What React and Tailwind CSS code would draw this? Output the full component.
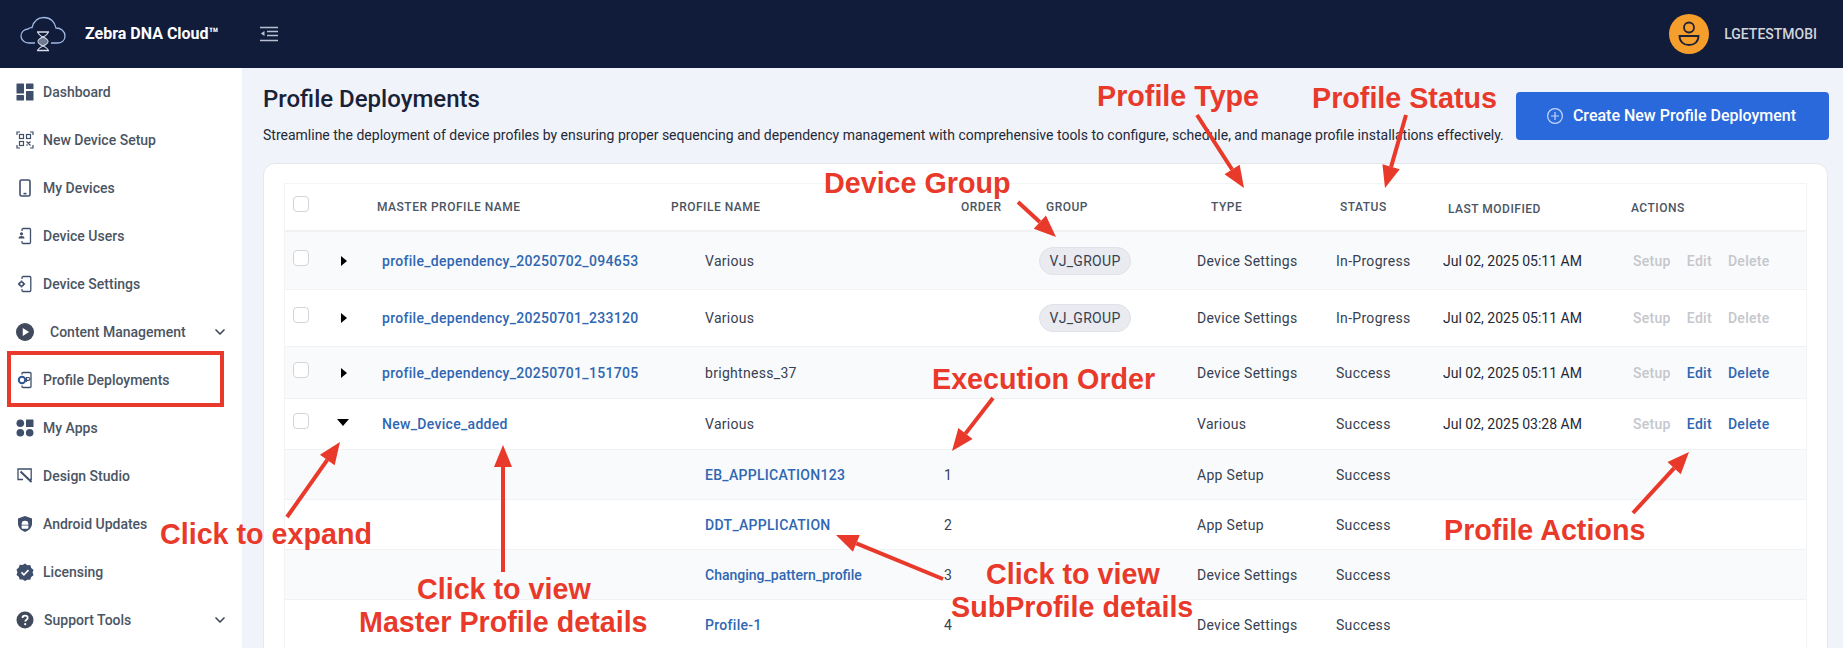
import React from "react";
import { ChevronDown } from "lucide-react";

const DashboardIcon = () => (
  <svg width="18" height="18" viewBox="0 0 18 18" fill="#3f4f6b">
    <rect x="0.5" y="0.5" width="7.5" height="10" rx="0.5" />
    <rect x="10" y="0.5" width="7.5" height="5.5" rx="0.5" />
    <rect x="0.5" y="12" width="7.5" height="5.5" rx="0.5" />
    <rect x="10" y="8" width="7.5" height="9.5" rx="0.5" />
  </svg>
);

const QrIcon = () => (
  <svg width="18" height="18" viewBox="0 0 18 18" fill="none" stroke="#3f4f6b" strokeWidth="1.2">
    <path d="M1 4V1h3M14 1h3v3M1 14v3h3M14 17h3v-3" />
    <rect x="3.5" y="3.5" width="4" height="4" />
    <rect x="10.5" y="3.5" width="4" height="4" />
    <rect x="3.5" y="10.5" width="4" height="4" />
    <path d="M10.5 10.5l4 4M14.5 10.5l-2 2M10.5 14.5l1-1" />
  </svg>
);

const PhoneIcon = () => (
  <svg width="18" height="18" viewBox="0 0 18 18" fill="none" stroke="#3f4f6b" strokeWidth="1.6">
    <rect x="4" y="1" width="10" height="16" rx="1.6" />
    <path d="M7.5 14.6h3" />
  </svg>
);

const DeviceUsersIcon = () => (
  <svg width="18" height="18" viewBox="0 0 18 18" fill="none" stroke="#3f4f6b" strokeWidth="1.3">
    <path d="M6 4V2.6C6 2 6.5 1.5 7 1.5h6.5c.6 0 1 .5 1 1v12.8c0 .7-.4 1.2-1 1.2H7c-.5 0-1-.5-1-1.2V14" />
    <circle cx="5.5" cy="6.8" r="1.6" fill="#3f4f6b" stroke="none" />
    <path d="M2.5 11.5c0-1.6 1.4-2.4 3-2.4s3 .8 3 2.4z" fill="#3f4f6b" stroke="none" />
  </svg>
);

const DeviceSettingsIcon = () => (
  <svg width="18" height="18" viewBox="0 0 18 18" fill="none" stroke="#3f4f6b" strokeWidth="1.3">
    <path d="M6 4V2.6C6 2 6.5 1.5 7 1.5h6.8c.6 0 1 .5 1 1v12.8c0 .7-.4 1.2-1 1.2H7c-.5 0-1-.5-1-1.2V14" />
    <circle cx="5.5" cy="9" r="2" strokeWidth="1.6" />
    <path d="M5.5 5.4v1.4M5.500 11.200v1.400M1.900 9h1.400M7.700 9h1.400" strokeWidth="1.500" />
  </svg>
);

const PlayIcon = () => (
  <svg width="20" height="20" viewBox="0 0 20 20">
    <circle cx="10" cy="10" r="10" fill="#414a5c" />
    <path d="M7.500 5.500l7 4.500-7 4.500z" fill="#fff" />
  </svg>
);

const DeploymentIcon = () => (
  <svg width="18" height="18" viewBox="0 0 18 18" fill="none">
    <path d="M6 3.500V2.500C6 2 6.500 1.500 7 1.500h7c.6 0 1 .5 1 1v13c0 .6-.4 1-1 1H7c-.5 0-1-.4-1-1v-1" stroke="#3f4f6b" strokeWidth="1.300" />
    <circle cx="6" cy="9" r="3.200" stroke="#2f5596" strokeWidth="2" />
    <path d="M10.500 11V6.500h2a1.300 1.300 0 010 2.800h-2" stroke="#3f4f6b" strokeWidth="1.200" />
  </svg>
);

const AppsIcon = () => (
  <svg width="18" height="18" viewBox="0 0 18 18" fill="#3f4f6b">
    <circle cx="4.300" cy="4.300" r="3.800" />
    <rect x="10" y="0.5" width="7.500" height="7.500" rx="0.5" />
    <circle cx="4.300" cy="13.700" r="3.800" />
    <circle cx="13.700" cy="13.700" r="3.800" />
  </svg>
);

const StudioIcon = () => (
  <svg width="18" height="18" viewBox="0 0 18 18" fill="none" stroke="#3f4f6b" strokeWidth="1.300">
    <path d="M14 12.500h1.200V2H2v10.500h5" />
    <path d="M4.500 4.500l11 10.500" strokeWidth="2" />
  </svg>
);

const ShieldIcon = () => (
  <svg width="18" height="18" viewBox="0 0 18 18">
    <path d="M9 1l7 2.400v5.200c0 4-3 7-7 8.400-4-1.400-7-4.400-7-8.400V3.400z" fill="#3f4f6b" />
    <path d="M5.600 9.200a3.400 3.400 0 016.800 0v.6H5.600zM5.600 10.600h6.800v2.200c0 .5-.4.9-.9.9h-5c-.5 0-.9-.4-.9-.9z" fill="#fff" />
  </svg>
);

const BadgeIcon = () => (
  <svg width="18" height="18" viewBox="0 0 18 18">
    <path d="M9 .5l2.400 1.700 2.900-.1.9 2.800 2.300 1.800-.9 2.800.9 2.800-2.300 1.700-.9 2.800-2.900-.1L9 18l-2.400-1.600-2.900.1-.9-2.800L.5 12l.9-2.800-.9-2.800 2.300-1.800.9-2.800 2.900.1z" fill="#3f4f6b" />
    <path d="M5.500 9.400l2.400 2.400 4.600-4.600" fill="none" stroke="#fff" strokeWidth="1.700" />
  </svg>
);

const HelpIcon = () => (
  <svg width="18" height="18" viewBox="0 0 18 18">
    <circle cx="9" cy="9" r="8.500" fill="#414a5c" />
    <path d="M6.500 7c0-1.500 1.100-2.400 2.600-2.400S11.700 5.500 11.700 6.900c0 1.700-2.500 1.900-2.500 3.600" fill="none" stroke="#fff" strokeWidth="1.700" />
    <circle cx="9.200" cy="13.200" r="1.100" fill="#fff" />
  </svg>
);

const CloudLogo = () => (
  <svg width="46" height="36" viewBox="0 0 46 36" fill="none">
    <path
      d="M15 27H9C4.500 27 1 24 1 20c0-3.800 3-6.800 7-7 1-1 2.300-1.500 4-1.300C13.500 5.500 18 1.500 24 1.500c6.500 0 11 4.500 12 10.500 5 0 9 3.500 9 8s-3.500 7-8 7h-6"
      stroke="#9fb8e4"
      strokeWidth="1.300"
    />
    <ellipse cx="23" cy="25.500" rx="4" ry="5" fill="#6f7a92" />
    <path d="M18 16c0 5 10 5 10 9.500s-10 4.500-10 9M28 16c0 5-10 5-10 9.500s10 4.500 10 9" stroke="#d6dce8" strokeWidth="1.100" />
    <path d="M17 16h12M17 34.500h12" stroke="#d6dce8" strokeWidth="1.300" />
  </svg>
);

const navItems = [
  { label: "Dashboard", icon: <DashboardIcon /> },
  { label: "New Device Setup", icon: <QrIcon /> },
  { label: "My Devices", icon: <PhoneIcon /> },
  { label: "Device Users", icon: <DeviceUsersIcon /> },
  { label: "Device Settings", icon: <DeviceSettingsIcon /> },
  { label: "Content Management", icon: <PlayIcon />, textClass: "ml-4", more: true },
  { label: "Profile Deployments", icon: <DeploymentIcon /> },
  { label: "My Apps", icon: <AppsIcon /> },
  { label: "Design Studio", icon: <StudioIcon /> },
  { label: "Android Updates", icon: <ShieldIcon /> },
  { label: "Licensing", icon: <BadgeIcon /> },
  { label: "Support Tools", icon: <HelpIcon />, textClass: "ml-[10px]", more: true },
];

const gridCols =
  "grid grid-cols-[46px_40px_300px_270px_90px_160px_140px_110px_185px_182px] items-center";

const rows = [
  { h: "h-[58px]", name: "profile_dependency_20250702_094653", profile: "Various", group: "VJ_GROUP", type: "Device Settings", status: "In-Progress", date: "Jul 02, 2025 05:11 AM", active: false, bg: "bg-[#f9fafb]" },
  { h: "h-[57px]", name: "profile_dependency_20250701_233120", profile: "Various", group: "VJ_GROUP", type: "Device Settings", status: "In-Progress", date: "Jul 02, 2025 05:11 AM", active: false, bg: "bg-white" },
  { h: "h-[52px]", name: "profile_dependency_20250701_151705", profile: "brightness_37", type: "Device Settings", status: "Success", date: "Jul 02, 2025 05:11 AM", active: true, bg: "bg-[#f9fafb]" },
  { h: "h-[51px]", name: "New_Device_added", profile: "Various", type: "Various", status: "Success", date: "Jul 02, 2025 03:28 AM", active: true, open: true, bg: "bg-white" },
];

const subRows = [
  { name: "EB_APPLICATION123", order: 1, type: "App Setup", bg: "bg-[#f9fafb]" },
  { name: "DDT_APPLICATION", order: 2, type: "App Setup", bg: "bg-white" },
  { name: "Changing_pattern_profile", nameClass: "tracking-normal", order: 3, type: "Device Settings", bg: "bg-[#f9fafb]" },
  { name: "Profile-1", order: 4, type: "Device Settings", bg: "bg-white" },
];

const Checkbox = () => (
  <div className="ml-2 -mt-[6px] size-4 rounded-[4px] border border-[#d1d5db] bg-white" />
);

const arrows = [
  [1197, 115, 1244, 188],
  [1406, 115, 1385, 188],
  [1018, 202, 1056, 237],
  [993, 398, 952, 451],
  [287, 517, 340, 442],
  [503, 572, 503, 445],
  [943, 579, 836, 535],
  [1633, 513, 1689, 452],
];

function Arrow({ from }) {
  const [x1, y1, x2, y2] = from;
  const len = Math.hypot(x2 - x1, y2 - y1);
  const ux = (x2 - x1) / len;
  const uy = (y2 - y1) / len;
  const bx = x2 - ux * 22;
  const by = y2 - uy * 22;
  const points = `${x2},${y2} ${bx - uy * 9},${by + ux * 9} ${bx + uy * 9},${by - ux * 9}`;
  return (
    <g>
      <line x1={x1} y1={y1} x2={bx} y2={by} stroke="#e8392a" strokeWidth="4" />
      <polygon points={points} fill="#e8392a" />
    </g>
  );
}

function Note({ className, children }) {
  return (
    <div
      className={`absolute whitespace-nowrap font-['Liberation_Sans',Arial,sans-serif] text-[28.7px] leading-[28px] font-bold text-[#e8392a] ${className}`}
    >
      {children}
    </div>
  );
}

export default function App() {
  return (
    <div className="relative h-[648px] overflow-hidden bg-[#f0f3f9] font-['Roboto',sans-serif]">
      <header className="flex h-[68px] items-center bg-[#111c3a] pl-[20px] pr-[26px]">
        <CloudLogo />
        <span className="ml-[19px] text-base font-bold text-white">Zebra DNA Cloud™</span>
        <svg className="ml-[41px]" width="18" height="16" viewBox="0 0 18 16" fill="none" stroke="#b9bfce" strokeWidth="1.600">
          <path d="M0 1.500h18M7 5.500h11M7 9.500h11M0 14.500h18" />
          <path d="M4.500 5v5L0.800 7.500z" fill="#b9bfce" stroke="none" />
        </svg>
        <div className="ml-auto flex size-10 items-center justify-center rounded-full bg-[#f59e2b]">
          <svg width="22" height="26" viewBox="0 0 22 26" fill="none" stroke="#1d2236" strokeWidth="1.800">
            <circle cx="11" cy="6.500" r="5" />
            <path d="M1.500 15h19c0 5.500-4 9-9.500 9s-9.500-3.500-9.500-9z" />
          </svg>
        </div>
        <span className="ml-[15px] text-sm font-medium text-[#d1d5db]">LGETESTMOBI</span>
      </header>

      <div className="flex h-[580px]">
        <aside className="w-[242px] shrink-0 bg-white">
          {navItems.map((item) => (
            <div key={item.label} className="flex h-12 items-center pl-4 pr-[14px] text-sm font-medium text-[#4b5563]">
              <span className="flex w-[18px] shrink-0 justify-center">{item.icon}</span>
              <span className={item.textClass || "ml-[9px]"}>{item.label}</span>
              {item.more && <ChevronDown className="ml-auto text-[#3f4654]" size={16} strokeWidth={2.500} />}
            </div>
          ))}
        </aside>

        <main className="min-w-0 flex-1 pl-[21px] pr-[14px]">
          <div className="flex h-[95px] items-start justify-between">
            <div>
              <h1 className="mt-[15px] text-2xl font-medium leading-8 text-[#1a2238]">Profile Deployments</h1>
              <p className="mt-[10px] text-sm leading-5 text-[#1f2937]">
                Streamline the deployment of device profiles by ensuring proper sequencing and dependency management with comprehensive tools to configure, schedule, and manage profile installations effectively.
              </p>
            </div>
            <button className="mt-6 flex h-12 w-[313px] items-center justify-center gap-[10px] rounded bg-[#2a69dc] pr-0.5 text-base font-medium text-white">
              <svg width="16" height="16" viewBox="0 0 16 16" fill="none" stroke="#c6d8f7" strokeWidth="1.200">
                <circle cx="8" cy="8" r="7.400" />
                <path d="M8 4v8M4 8h8" />
              </svg>
              Create New Profile Deployment
            </button>
          </div>

          <section className="mr-px h-[500px] rounded-xl border border-[#e5e7eb] bg-white pl-5 pr-5 pt-[19px]">
            <div className="border border-b-0 border-[#f3f4f6]">
              <div className={`${gridCols} h-[48px] border-b-2 border-[#f1f2f4] text-xs font-medium tracking-[0.5px] text-[#4b5563]`}>
                <Checkbox />
                <span />
                <span className="pl-[6px]">MASTER PROFILE NAME</span>
                <span>PROFILE NAME</span>
                <span className="pl-5">ORDER</span>
                <span className="pl-[15px]">GROUP</span>
                <span className="-mt-px pl-5">TYPE</span>
                <span className="pl-[9px]">STATUS</span>
                <span className="mt-[3px] pl-[7px]">LAST MODIFIED</span>
                <span className="mt-px pl-[5px]">ACTIONS</span>
              </div>

              {rows.map((row) => (
                <div key={row.name} className={`${gridCols} ${row.h} ${row.bg} border-b border-[#f1f2f4] text-sm tracking-[0.3px] text-[#374151]`}>
                  <Checkbox />
                  <div className="pl-[10px]">
                    {row.open ? (
                      <div className="-mt-1 -ml-1 h-0 w-0 border-x-[6px] border-t-[7px] border-x-transparent border-t-black" />
                    ) : (
                      <div className="h-0 w-0 border-y-[5px] border-l-[6px] border-y-transparent border-l-black" />
                    )}
                  </div>
                  <span className="pl-[11px] font-medium text-[#2f67b2]">{row.name}</span>
                  <span className="pl-[34px]">{row.profile}</span>
                  <span />
                  <div className="pl-2">
                    {row.group && (
                      <span className="flex h-7 w-[92px] items-center justify-center rounded-full border border-[#dfe2e8] bg-[#e9ebf0] text-sm text-[#374151]">
                        {row.group}
                      </span>
                    )}
                  </div>
                  <span className="pl-[6px]">{row.type}</span>
                  <span className="pl-[5px]">{row.status}</span>
                  <span className="pl-[2px] tracking-normal text-[#1f2937]">{row.date}</span>
                  <div className="flex gap-[16px] pl-[7px] font-medium">
                    <span className="text-[#c4c7cc]">Setup</span>
                    <span className={row.active ? "text-[#2f67b2]" : "text-[#c4c7cc]"}>Edit</span>
                    <span className={row.active ? "text-[#2f67b2]" : "text-[#c4c7cc]"}>Delete</span>
                  </div>
                </div>
              ))}

              {subRows.map((row) => (
                <div key={row.name} className={`${gridCols} h-[50px] ${row.bg} border-b border-[#f1f2f4] text-sm tracking-[0.3px] text-[#374151]`}>
                  <span />
                  <span />
                  <span />
                  <span className={`pl-[34px] font-medium text-[#2f67b2] ${row.nameClass || ""}`}>{row.name}</span>
                  <span className="pl-[3px]">{row.order}</span>
                  <span />
                  <span className="pl-[6px]">{row.type}</span>
                  <span className="pl-[5px]">Success</span>
                  <span />
                  <span />
                </div>
              ))}
            </div>
          </section>
        </main>
      </div>

      {/* annotations drawn over the screenshot */}
      <div className="absolute left-[7px] top-[351px] h-[56px] w-[217px] border-4 border-[#e8392a]" />
      <svg className="pointer-events-none absolute left-0 top-0" width="1843" height="648">
        {arrows.map((a) => (
          <Arrow key={a.join("-")} from={a} />
        ))}
      </svg>
      <Note className="left-[1097px] top-[82px]">Profile Type</Note>
      <Note className="left-[1312px] top-[84px]">Profile Status</Note>
      <Note className="left-[824px] top-[169px]">Device Group</Note>
      <Note className="left-[932px] top-[365px]">Execution Order</Note>
      <Note className="left-[160px] top-[520px]">Click to expand</Note>
      <Note className="left-[417px] top-[575px]">Click to view</Note>
      <Note className="left-[359px] top-[608px]">Master Profile details</Note>
      <Note className="left-[986px] top-[560px]">Click to view</Note>
      <Note className="left-[951px] top-[593px]">SubProfile details</Note>
      <Note className="left-[1444px] top-[516px]">Profile Actions</Note>
    </div>
  );
}
